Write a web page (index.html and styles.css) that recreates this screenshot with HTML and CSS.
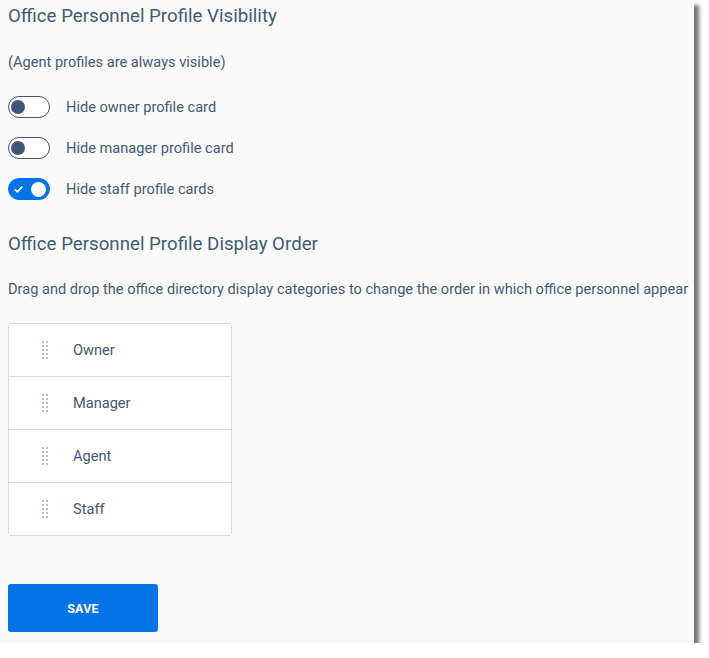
FILE: index.html
```html
<!DOCTYPE html>
<html lang="en">
<head>
<meta charset="utf-8">
<title>Office Personnel Profile Settings</title>
<link rel="stylesheet" href="styles.css">
</head>
<body>
<div class="page">
  <h2 class="heading">Office Personnel Profile Visibility</h2>
  <p class="note">(Agent profiles are always visible)</p>
  <div class="toggles">
    <label class="toggle-row">
      <span class="switch"><span class="knob"></span></span>
      <span class="toggle-label">Hide owner profile card</span>
    </label>
    <label class="toggle-row">
      <span class="switch"><span class="knob"></span></span>
      <span class="toggle-label">Hide manager profile card</span>
    </label>
    <label class="toggle-row">
      <span class="switch on">
        <svg class="check" width="9" height="7" viewBox="0 0 9 7"><path d="M1.2 3.8 L3.4 5.8 L7.8 1.2" fill="none" stroke="#fff" stroke-width="1.8" stroke-linecap="round" stroke-linejoin="round"/></svg>
        <span class="knob"></span>
      </span>
      <span class="toggle-label">Hide staff profile cards</span>
    </label>
  </div>
  <h2 class="heading heading-order">Office Personnel Profile Display Order</h2>
  <p class="desc">Drag and drop the office directory display categories to change the order in which office personnel appear</p>
  <ul class="order-list">
    <li class="order-item"><span class="handle"></span><span class="item-label">Owner</span></li>
    <li class="order-item"><span class="handle"></span><span class="item-label">Manager</span></li>
    <li class="order-item"><span class="handle"></span><span class="item-label">Agent</span></li>
    <li class="order-item"><span class="handle"></span><span class="item-label">Staff</span></li>
  </ul>
  <button class="save-btn" type="button">SAVE</button>
</div>
</body>
</html>
```
FILE: styles.css
```css
html, body {
  margin: 0;
  padding: 0;
  background: #ffffff;
}
body {
  font-family: Roboto, "Liberation Sans", sans-serif;
  color: #435a74;
}
.page {
  width: 686px;
  height: 643px;
  padding: 0 0 0 8px;
  background: #fafafa;
  box-shadow: 5px 5px 4px rgba(0, 0, 0, 0.55);
  overflow: hidden;
  display: flex;
  flex-direction: column;
  align-items: flex-start;
}
.heading {
  margin: 5px 0 0;
  font-size: 18.7px;
  font-weight: 400;
  line-height: 22px;
  color: #435a74;
}
.note {
  margin: 27px 0 0;
  font-size: 14.6px;
  line-height: 17px;
}
.toggles {
  margin-top: 25px;
  display: flex;
  flex-direction: column;
  gap: 19px;
}
.toggle-row {
  display: flex;
  align-items: center;
  gap: 16px;
  height: 22px;
}
.switch {
  position: relative;
  box-sizing: border-box;
  width: 42px;
  height: 22px;
  border: 1.5px solid #3e5876;
  border-radius: 11px;
  background: #ffffff;
  display: flex;
  align-items: center;
  padding-left: 2px;
}
.knob {
  width: 14px;
  height: 14px;
  border-radius: 50%;
  background: #3e5876;
}
.switch.on {
  background: #0073e6;
  border-color: #0073e6;
  justify-content: space-between;
  padding: 0 3px 0 5px;
}
.switch.on .knob {
  background: #ffffff;
  width: 15px;
  height: 15px;
}
.check {
  display: block;
}
.toggle-label {
  font-size: 14.6px;
  line-height: 17px;
}
.heading-order {
  margin-top: 33px;
}
.desc {
  margin: 26px 0 0;
  font-size: 14.6px;
  line-height: 17px;
  white-space: nowrap;
}
.order-list {
  list-style: none;
  margin: 25px 0 0;
  padding: 0;
  width: 224px;
  box-sizing: border-box;
  border: 1px solid #d3dbe5;
  border-radius: 3px;
  background: #ffffff;
}
.order-item {
  height: 52px;
  display: flex;
  align-items: center;
  border-top: 1px solid #d3dbe5;
}
.order-item:first-child {
  border-top: none;
}
.handle {
  width: 6px;
  height: 18px;
  margin-left: 33px;
  background-image: radial-gradient(circle, #b3c2d4 0.9px, transparent 1.1px);
  background-size: 4px 4px;
  background-position: -1px -1px;
}
.item-label {
  margin-left: 25px;
  font-size: 14.6px;
}
.save-btn {
  margin-top: 48px;
  width: 150px;
  height: 48px;
  border: none;
  border-radius: 3px;
  background: #0073e6;
  color: #ffffff;
  font-family: Roboto, "Liberation Sans", sans-serif;
  font-weight: 700;
  font-size: 12.5px;
  letter-spacing: 0.2px;
  padding: 0;
}
```
